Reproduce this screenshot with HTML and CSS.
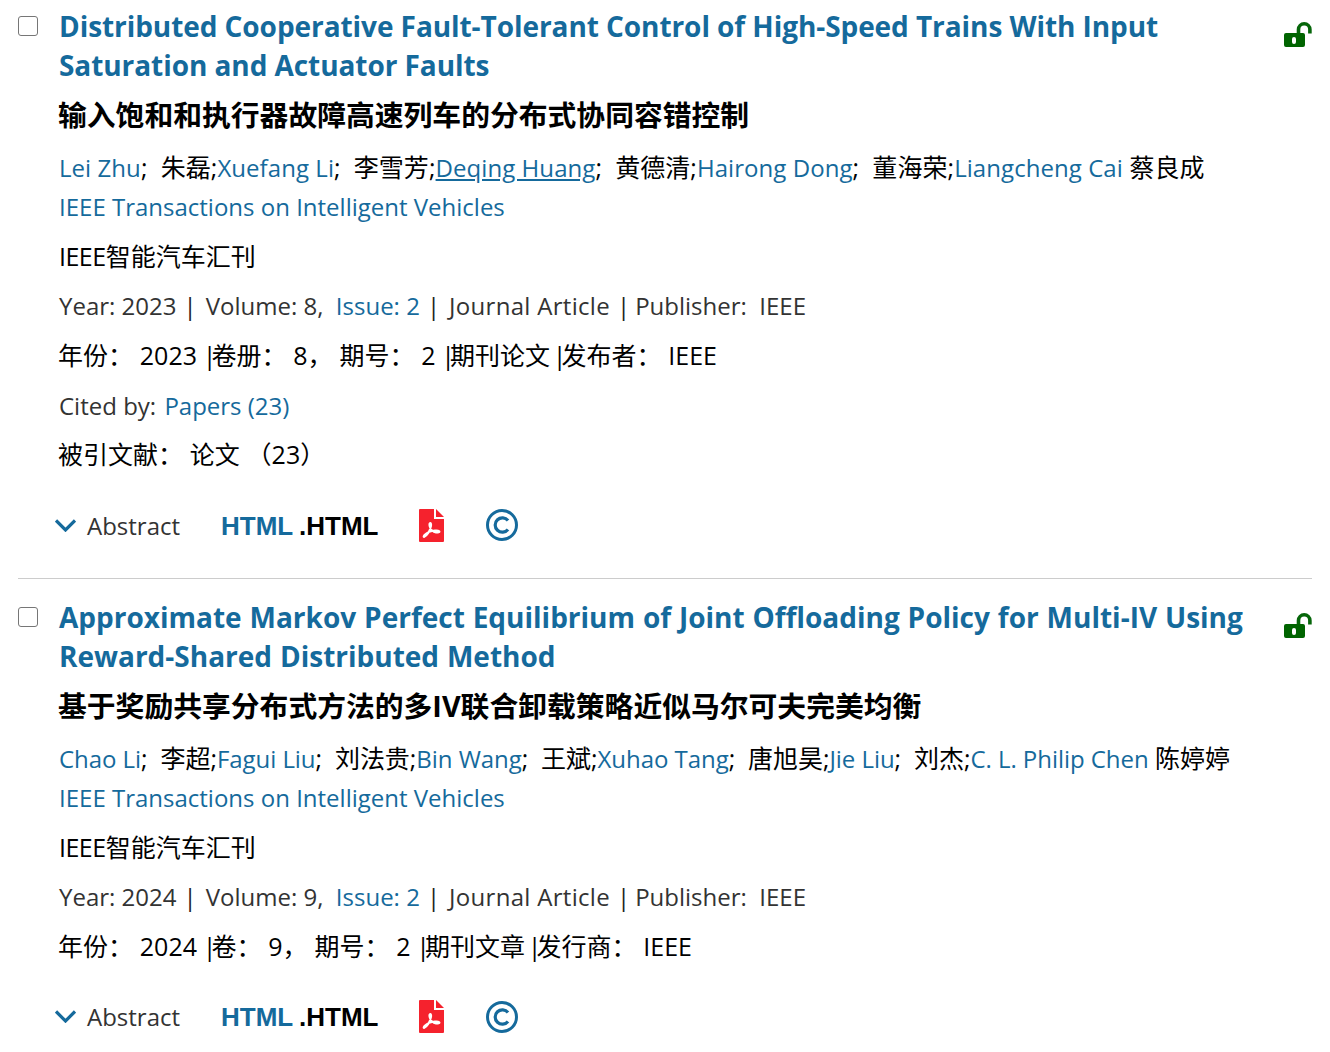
FILE: index.html
```html
<!DOCTYPE html>
<html lang="en">
<head>
<meta charset="utf-8">
<title>Results</title>
<link rel="stylesheet" href="styles.css">
</head>
<body>
<svg class="defs" width="0" height="0" aria-hidden="true">
  <symbol id="lock" viewBox="0 0 28 25">
    <path d="M14.500 11V7.500a5.700 5.700 0 0 1 11.400 0v4" fill="none" stroke="#06660a" stroke-width="3.600"/>
    <path fill-rule="evenodd" fill="#006400" d="M2 11h17a2 2 0 0 1 2 2v10a2 2 0 0 1-2 2H2a2 2 0 0 1-2-2V13a2 2 0 0 1 2-2zm8 4a2 2 0 0 0-2 2v3a2 2 0 0 0 4 0v-3a2 2 0 0 0-2-2z"/>
  </symbol>
  <symbol id="pdf" viewBox="0 0 25 33">
    <path fill="#f5222d" d="M1 0h14v10h10v22a1 1 0 0 1-1 1H1a1 1 0 0 1-1-1V1a1 1 0 0 1 1-1z"/>
    <path fill="#f5222d" d="M17 0l8 8h-8z"/>
    <path fill="none" stroke="#fff" stroke-width="2" d="M5 28c3-1 6-6 7-11 .4-2-.2-3-.8-3s-1 1-.6 3c.7 3 3.500 6 6.400 6.500 2 .3 3.500-.2 3.500-1s-2-1.200-4.500-.9c-4 .4-8 2-10.500 4.400-1 1-1 2-.5 2z"/>
  </symbol>
  <symbol id="copy" viewBox="0 0 32 32">
    <circle cx="16" cy="16" r="14.500" fill="none" stroke="#156a9c" stroke-width="3"/>
    <path d="M22 11.500a7.200 7.200 0 1 0 0 9" fill="none" stroke="#156a9c" stroke-width="3.200"/>
  </symbol>
  <symbol id="chev" viewBox="0 0 21 13">
    <path d="M1 1.500L10.500 11 20 1.500" fill="none" stroke="#156a9c" stroke-width="3.200"/>
  </symbol>
</svg>

<main class="list">
  <article class="item">
    <input class="check" type="checkbox">
    <div class="body">
      <h2 class="title title-a"><a href="#">Distributed Cooperative Fault-Tolerant Control of High-Speed Trains With Input Saturation and Actuator Faults</a></h2>
      <p class="cn-title">输入饱和和执行器故障高速列车的分布式协同容错控制</p>
      <p class="authors authors-a"><a href="#">Lei Zhu</a>;&nbsp; 朱磊;<a href="#">Xuefang Li</a>;&nbsp; 李雪芳;<a href="#" class="ul">Deqing Huang</a>;&nbsp; 黄德清;<a href="#">Hairong Dong</a>;&nbsp; 董海荣;<a href="#">Liangcheng Cai</a> 蔡良成</p>
      <p class="journal"><a href="#">IEEE Transactions on Intelligent Vehicles</a></p>
      <p class="line black"><span class="ieee">IEEE</span>智能汽车汇刊</p>
      <p class="line en">Year: 2023<span class="sep">|</span>Volume: 8,&nbsp; <a href="#">Issue: 2</a><span class="sep">|</span><span class="jtype">Journal Article</span><span class="sep-r">|</span>Publisher:&nbsp; IEEE</p>
      <p class="line black zh">年份： 2023 <span class="bar">|</span>卷册： 8， 期号： 2 <span class="bar">|</span>期刊论文 <span class="bar bar-last">|</span>发布者： IEEE</p>
      <p class="line en cited">Cited by: <a href="#">Papers (23)</a></p>
      <p class="line black zh">被引文献： 论文 （23）</p>
      <div class="actions">
        <svg class="chev"><use href="#chev"/></svg>
        <span class="abstract">Abstract</span>
        <span class="html"><a href="#">HTML</a> .HTML</span>
        <svg class="pdf"><use href="#pdf"/></svg>
        <svg class="copy"><use href="#copy"/></svg>
      </div>
    </div>
    <svg class="lock"><use href="#lock"/></svg>
  </article>
  <article class="item">
    <input class="check" type="checkbox">
    <div class="body">
      <h2 class="title title-b"><a href="#">Approximate Markov Perfect Equilibrium of Joint Offloading Policy for Multi-IV Using Reward-Shared Distributed Method</a></h2>
      <p class="cn-title">基于奖励共享分布式方法的多IV联合卸载策略近似马尔可夫完美均衡</p>
      <p class="authors authors-b"><a href="#">Chao Li</a>;&nbsp; 李超;<a href="#">Fagui Liu</a>;&nbsp; 刘法贵;<a href="#">Bin Wang</a>;&nbsp; 王斌;<a href="#">Xuhao Tang</a>;&nbsp; 唐旭昊;<a href="#">Jie Liu</a>;&nbsp; 刘杰;<a href="#">C. L. Philip Chen</a> 陈婷婷</p>
      <p class="journal"><a href="#">IEEE Transactions on Intelligent Vehicles</a></p>
      <p class="line black"><span class="ieee">IEEE</span>智能汽车汇刊</p>
      <p class="line en">Year: 2024<span class="sep">|</span>Volume: 9,&nbsp; <a href="#">Issue: 2</a><span class="sep">|</span><span class="jtype">Journal Article</span><span class="sep-r">|</span>Publisher:&nbsp; IEEE</p>
      <p class="line black zh">年份： 2024 <span class="bar">|</span>卷： 9， 期号： 2 <span class="bar">|</span>期刊文章 <span class="bar bar-last">|</span>发行商： IEEE</p>
      <div class="actions">
        <svg class="chev"><use href="#chev"/></svg>
        <span class="abstract">Abstract</span>
        <span class="html"><a href="#">HTML</a> .HTML</span>
        <svg class="pdf"><use href="#pdf"/></svg>
        <svg class="copy"><use href="#copy"/></svg>
      </div>
    </div>
    <svg class="lock"><use href="#lock"/></svg>
  </article>
</main>
</body>
</html>
```

FILE: styles.css
```css
html, body { margin: 0; padding: 0; background: #fff; }
body {
  font-family: "Open Sans", "Noto Sans CJK SC", sans-serif;
  font-size: 25px;
  color: #333;
  height: 1052px;
  overflow: hidden;
}
.defs { position: absolute; }
a { color: #156a9c; text-decoration: none; font-size: 24px; }
.list { padding: 7px 18px 0; }
.item { display: flex; align-items: flex-start; border-bottom: 1px solid #ccc; padding-bottom: 31px; margin-bottom: 19px; }
.item:last-child { border-bottom: 0; }
.check {
  appearance: none; width: 20px; height: 20px; margin: 9px 21px 0 0;
  border: 1.500px solid #767676; border-radius: 3px; background: #fff; flex: none; box-sizing: border-box;
}
.body { flex: 1; min-width: 0; }
.title { margin: 0; font-size: 28px; line-height: 39px; font-weight: 700; }
.title a { font-size: 28px; }
.title-a { letter-spacing: -.07px; }
.title-b { word-spacing: .6px; }
.cn-title { margin: 10px 0 0 -1px; font-size: 28.800px; line-height: 39px; font-weight: 700; color: #000; }
.authors { margin: 14px 0 0; line-height: 39px; color: #000; white-space: nowrap; }
.authors-a { letter-spacing: .06px; }
.authors-b { letter-spacing: -.05px; }
.ul { text-decoration: underline; }
.journal { margin: 0; line-height: 39.500px; }
.line { margin: 10px 0 0; line-height: 39.700px; }
.en { font-size: 24px; }
.black { color: #000; }
.zh { margin-left: -1px; word-spacing: .3px; }
.ieee { letter-spacing: -.5px; }
.sep { margin: 0 9px 0 7px; color: #222; }
.sep-r { margin: 0 5px 0 7px; color: #222; }
.jtype { letter-spacing: .3px; }
.cited a { margin-left: 2px; }
.bar { letter-spacing: -5px; margin-left: -1px; }
.bar-last { margin-left: -4px; }
.actions { display: flex; align-items: center; margin-top: 28px; height: 44px; }
.chev { width: 21px; height: 13px; margin-left: -4px; }
.abstract { margin-left: 11px; font-size: 24px; }
.html { margin-left: 41px; font-weight: 700; color: #000; font-family: "Liberation Sans", sans-serif; font-size: 26px; word-spacing: -1px; position: relative; top: 1px; }
.html a { font-size: 26px; }
.pdf { width: 25px; height: 33px; margin-left: 41px; }
.copy { width: 32px; height: 32px; margin-left: 42px; }
.lock { width: 28px; height: 25px; flex: none; margin: 15px 0 0 32px; }
```
